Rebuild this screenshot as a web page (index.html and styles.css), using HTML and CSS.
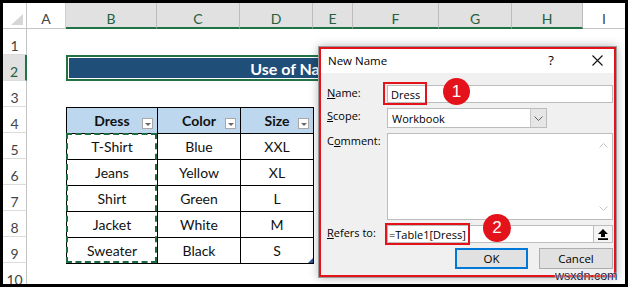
FILE: index.html
```html
<!DOCTYPE html>
<html lang="en">
<head>
<meta charset="utf-8">
<title>New Name</title>
<link rel="stylesheet" href="styles.css">
</head>
<body>
<div class="frame">
  <div class="sheet">
    <div class="corner"></div>
    <div class="ch">A</div>
    <div class="ch sel">B</div>
    <div class="ch sel">C</div>
    <div class="ch sel">D</div>
    <div class="ch sel">E</div>
    <div class="ch sel">F</div>
    <div class="ch sel">G</div>
    <div class="ch sel">H</div>
    <div class="ch last">I</div>

    <div class="rh">1</div>
    <div class="rh sel">2</div>
    <div class="rh">3</div>
    <div class="rh">4</div>
    <div class="rh">5</div>
    <div class="rh">6</div>
    <div class="rh">7</div>
    <div class="rh">8</div>
    <div class="rh">9</div>
    <div class="rh">10</div>

    <div class="title">Use of Named Range</div>

    <div class="tablewrap">
      <table class="data">
        <colgroup><col class="cb"><col class="cc"><col class="cd"></colgroup>
        <thead>
          <tr><th>Dress<span class="dd"></span></th><th>Color<span class="dd"></span></th><th>Size<span class="dd"></span></th></tr>
        </thead>
        <tbody>
          <tr><td>T-Shirt</td><td>Blue</td><td>XXL</td></tr>
          <tr><td>Jeans</td><td>Yellow</td><td>XL</td></tr>
          <tr><td>Shirt</td><td>Green</td><td>L</td></tr>
          <tr><td>Jacket</td><td>White</td><td>M</td></tr>
          <tr><td>Sweater</td><td>Black</td><td class="endcell">S</td></tr>
        </tbody>
      </table>
    </div>
    <div class="ants"></div>
  </div>

  <div class="dialog">
    <div class="titlebar">
      <span class="ttl">New Name</span>
      <span class="help">?</span>
      <span class="close"><svg width="11" height="11" viewBox="0 0 11 11"><path d="M0.5 0.5 L10.5 10.5 M10.5 0.5 L0.5 10.5" stroke="#111" stroke-width="1.1" fill="none"/></svg></span>
    </div>
    <div class="form">
      <label class="lbl"><u>N</u>ame:</label>
      <div class="field name">Dress</div>
      <label class="lbl"><u>S</u>cope:</label>
      <div class="field scope"><span>Workbook</span><span class="arrow"><svg width="9" height="5" viewBox="0 0 9 5"><path d="M0.5 0.5 L4.5 4.5 L8.5 0.5" stroke="#606060" fill="none"/></svg></span></div>
      <label class="lbl">C<u>o</u>mment:</label>
      <div class="field comment">
        <div class="scroll">
          <svg width="9" height="5" viewBox="0 0 9 5"><path d="M0.5 4.5 L4.5 0.5 L8.5 4.5" stroke="#c4c4c4" fill="none"/></svg>
          <svg width="9" height="5" viewBox="0 0 9 5"><path d="M0.5 0.5 L4.5 4.5 L8.5 0.5" stroke="#c4c4c4" fill="none"/></svg>
        </div>
      </div>
      <label class="lbl"><u>R</u>efers to:</label>
      <div class="field refers"><span class="val">=Table1[Dress]</span><span class="collapse"><svg width="10" height="11" viewBox="0 0 10 11"><path d="M5 0 L10 5 L7 5 L7 8 L3 8 L3 5 L0 5 Z" fill="#000"/><rect x="0" y="9.2" width="10" height="1.8" fill="#000"/></svg></span></div>
      <div class="btns">
        <button class="btn ok">OK</button>
        <button class="btn cancel">Cancel</button>
      </div>
    </div>
    <div class="mark m1"></div>
    <div class="num n1">1</div>
    <div class="mark m2"></div>
    <div class="num n2">2</div>
  </div>

  <div class="wm">wsxdn.com</div>
</div>
</body>
</html>
```

FILE: styles.css
```css
* { box-sizing: border-box; }
html, body { margin: 0; padding: 0; }
body {
  background: #000;
  width: 628px;
  height: 287px;
  overflow: hidden;
}
.frame {
  position: relative;
  margin: 3px 3px 0 3px;
  width: 622px;
  height: 281px;
  background: #fff;
  overflow: hidden;
}

/* ---------- sheet ---------- */
.sheet {
  display: grid;
  grid-template-columns: 24px 39px 91px 83px 73px 40px 86px 73px 71px 42px;
  grid-template-rows: repeat(11, 26px);
  font-family: Lato, "Liberation Sans", sans-serif;
  font-size: 14px;
  color: #000;
}
.corner {
  position: relative;
  background: #fff;
  border-right: 1px solid #c4c4c4;
  border-bottom: 1px solid #c4c4c4;
}
.corner::after {
  content: "";
  position: absolute;
  right: 3px;
  bottom: 3px;
  width: 12px;
  height: 11px;
  background: #d6d6d6;
  clip-path: polygon(100% 0, 100% 100%, 0 100%);
}
.ch {
  display: flex;
  justify-content: center;
  padding-top: 8px;
  line-height: 16px;
  color: #444;
  background: #fff;
  border-right: 1px solid #d0d0d0;
  border-bottom: 1px solid #c4c4c4;
}
.ch.sel {
  background: #e1e1e1;
  color: #24603d;
  border-right-color: #bdbdbd;
  border-bottom: 2px solid #217346;
}
.ch.last { border-right: none; }
.rh {
  grid-column: 1;
  display: flex;
  justify-content: center;
  padding-top: 9px;
  line-height: 16px;
  color: #444;
  background: #fff;
  border-right: 1px solid #c4c4c4;
  border-bottom: 1px solid #dcdcdc;
}
.rh.sel {
  background: #e1e1e1;
  color: #24603d;
  border-right: 2px solid #217346;
}

.title {
  grid-column: 3 / 10;
  grid-row: 3;
  display: flex;
  align-items: center;
  justify-content: center;
  border: 2px solid #217346;
  box-shadow: inset 0 0 0 1px #fff;
  background: #1f4e78;
  color: #fff;
  font-weight: 700;
  font-size: 16px;
}

.tablewrap {
  grid-column: 3 / 6;
  grid-row: 5 / 11;
}
.data {
  width: 100%;
  height: 100%;
  border-collapse: collapse;
  table-layout: fixed;
}
.cb { width: 91px; }
.cc { width: 83px; }
.cd { width: 73px; }
.data th, .data td {
  border: 1px solid #000;
  padding: 0;
  height: 26px;
  text-align: center;
  vertical-align: middle;
  font-size: 14px;
  color: #111;
}
.data th {
  position: relative;
  background: #bdd7ee;
  font-weight: 700;
}
.dd {
  position: absolute;
  right: 4px;
  top: 10px;
  width: 11px;
  height: 11px;
  background: #fff;
  border: 1px solid #a9a9a9;
}
.dd::after {
  content: "";
  position: absolute;
  left: 2px;
  top: 4px;
  border-left: 3px solid transparent;
  border-right: 3px solid transparent;
  border-top: 3px solid #6a6a6a;
}
.endcell { position: relative; }
.endcell::after {
  content: "";
  position: absolute;
  right: 0;
  bottom: 0;
  width: 5px;
  height: 5px;
  background: #2f5597;
  clip-path: polygon(100% 0, 100% 100%, 0 100%);
}
.ants {
  grid-column: 3 / 4;
  grid-row: 6 / 11;
  z-index: 1;
  border: 2px dashed #1e6b41;
}

/* ---------- dialog ---------- */
.dialog {
  position: absolute;
  left: 315px;
  top: 43px;
  width: 299px;
  height: 232px;
  background: #f0f0f0;
  border: 1px solid #9a9a9a;
  box-shadow: 0 0 9px rgba(0, 0, 0, 0.28);
  font-family: "Open Sans", "Noto Sans", sans-serif;
  font-size: 11px;
  color: #000;
}
.dialog::after {
  content: "";
  position: absolute;
  inset: 0;
  border: 2px solid #e3121b;
  pointer-events: none;
}
.titlebar {
  height: 26px;
  background: #fff;
  display: flex;
  align-items: center;
}
.ttl {
  flex: 1;
  padding-left: 9px;
  font-size: 11.5px;
}
.help {
  width: 46px;
  text-align: center;
  font-size: 13px;
}
.close {
  width: 38px;
  margin-left: 4px;
  display: flex;
  justify-content: center;
}
.form {
  display: grid;
  grid-template-columns: 60px 1fr;
  grid-template-rows: 18px 20px 87px 18px 21px;
  row-gap: 5px;
  padding: 12px 3px 0 8px;
}
.lbl {
  line-height: 15px;
}
.field {
  display: flex;
  align-items: center;
  background: #fff;
  border: 1px solid #bcbcbc;
  padding-left: 3px;
  font-size: 11px;
}
.scope {
  width: 160px;
  padding-left: 4px;
}
.arrow {
  margin-left: auto;
  width: 16px;
  height: 100%;
  display: flex;
  align-items: center;
  justify-content: center;
  background: #e6e6e6;
  border-left: 1px solid #c8c8c8;
}
.comment {
  justify-content: flex-end;
  padding-left: 0;
}
.scroll {
  width: 17px;
  height: 100%;
  display: flex;
  flex-direction: column;
  justify-content: space-between;
  align-items: center;
  padding: 9px 0 8px;
}
.refers { padding-left: 1px; }
.collapse {
  margin-left: auto;
  width: 19px;
  height: 100%;
  display: flex;
  align-items: center;
  justify-content: center;
  background: #f4f4f4;
  border-left: 1px solid #bcbcbc;
}
.btns {
  grid-column: 1 / -1;
  display: flex;
  justify-content: flex-end;
  gap: 11px;
}
.btn {
  width: 73px;
  height: 21px;
  padding: 0;
  background: #e1e1e1;
  border: 1px solid #adadad;
  font-family: inherit;
  font-size: 11.5px;
  color: #000;
}
.btn.ok { border: 2px solid #0078d7; }
.btn.cancel { width: 74px; }

.mark {
  position: absolute;
  border: 2px solid #e3121b;
}
.m1 { left: 64px; top: 35px; width: 44px; height: 23px; }
.m2 { left: 66px; top: 176px; width: 85px; height: 22px; }
.num {
  position: absolute;
  width: 27px;
  height: 27px;
  border-radius: 50%;
  background: #e3121b;
  color: #fff;
  font-family: "Liberation Sans", sans-serif;
  font-size: 17px;
  line-height: 27px;
  text-align: center;
}
.n1 { left: 124px; top: 31px; }
.n2 { left: 164px; top: 167px; width: 28px; height: 28px; line-height: 28px; }

.wm {
  position: absolute;
  left: 552px;
  top: 266px;
  font-family: "Liberation Sans", sans-serif;
  font-size: 12.5px;
  color: #2a2440;
  text-shadow: 0 0 2px #fff, 0 0 1px #fff;
}
```
